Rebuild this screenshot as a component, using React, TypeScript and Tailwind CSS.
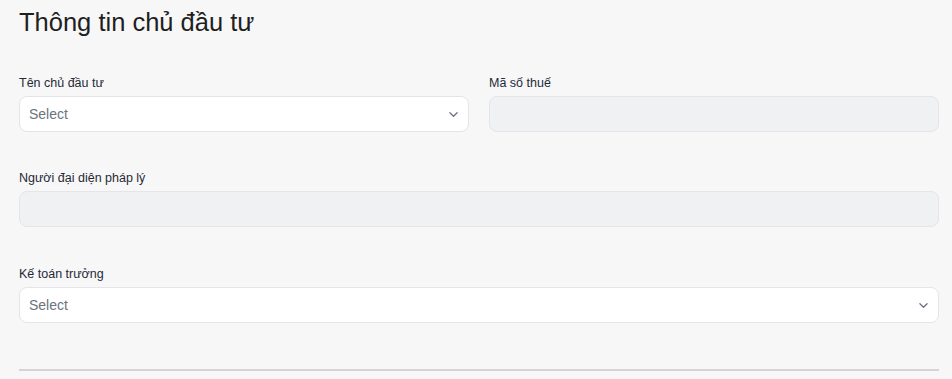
import React from 'react';

const Chevron = () => (
  <svg width="9" height="9" viewBox="0 0 10 10" fill="none" stroke="#6b7280" strokeWidth="1.4" strokeLinecap="round" strokeLinejoin="round">
    <polyline points="1 3 5 7 9 3" />
  </svg>
);

const SelectBox = ({ placeholder = 'Select' }: { placeholder?: string }) => (
  <div className="flex h-9 items-center justify-between rounded-lg border border-[#e4e5e8] bg-white pl-[9px] pr-[10px]">
    <span className="text-sm text-[#6b7280]">{placeholder}</span>
    <Chevron />
  </div>
);

const DisabledBox = () => <div className="h-9 rounded-lg border border-[#e4e5e8] bg-[#f0f1f3]" />;

const Field = ({ label, children }: { label: string; children: React.ReactNode }) => (
  <div className="flex flex-col">
    <label className="mb-[5px] text-[12.5px] leading-4 text-[#1f2937]">{label}</label>
    {children}
  </div>
);

export default function App() {
  return (
    <div
      className="min-h-[379px] w-[952px] bg-[#f7f7f7] pl-[19px] pr-[13px] pt-[4px]"
      style={{ fontFamily: '"Liberation Sans", Arial, sans-serif' }}
    >
      <h1 className="text-[25.5px] leading-9 text-[#1f1f1f]">Thông tin chủ đầu tư</h1>

      <div className="mt-[35px] flex flex-col">
        <div className="grid grid-cols-2 gap-5">
          <Field label="Tên chủ đầu tư">
            <SelectBox />
          </Field>
          <Field label="Mã số thuế">
            <DisabledBox />
          </Field>
        </div>
        <div className="mt-[38px]">
          <Field label="Người đại diện pháp lý">
            <DisabledBox />
          </Field>
        </div>
        <div className="mt-[39px]">
          <Field label="Kế toán trưởng">
            <SelectBox />
          </Field>
        </div>
      </div>

      <div className="mt-[46px] border-t-2 border-[#d4d4d8]" />
    </div>
  );
}
